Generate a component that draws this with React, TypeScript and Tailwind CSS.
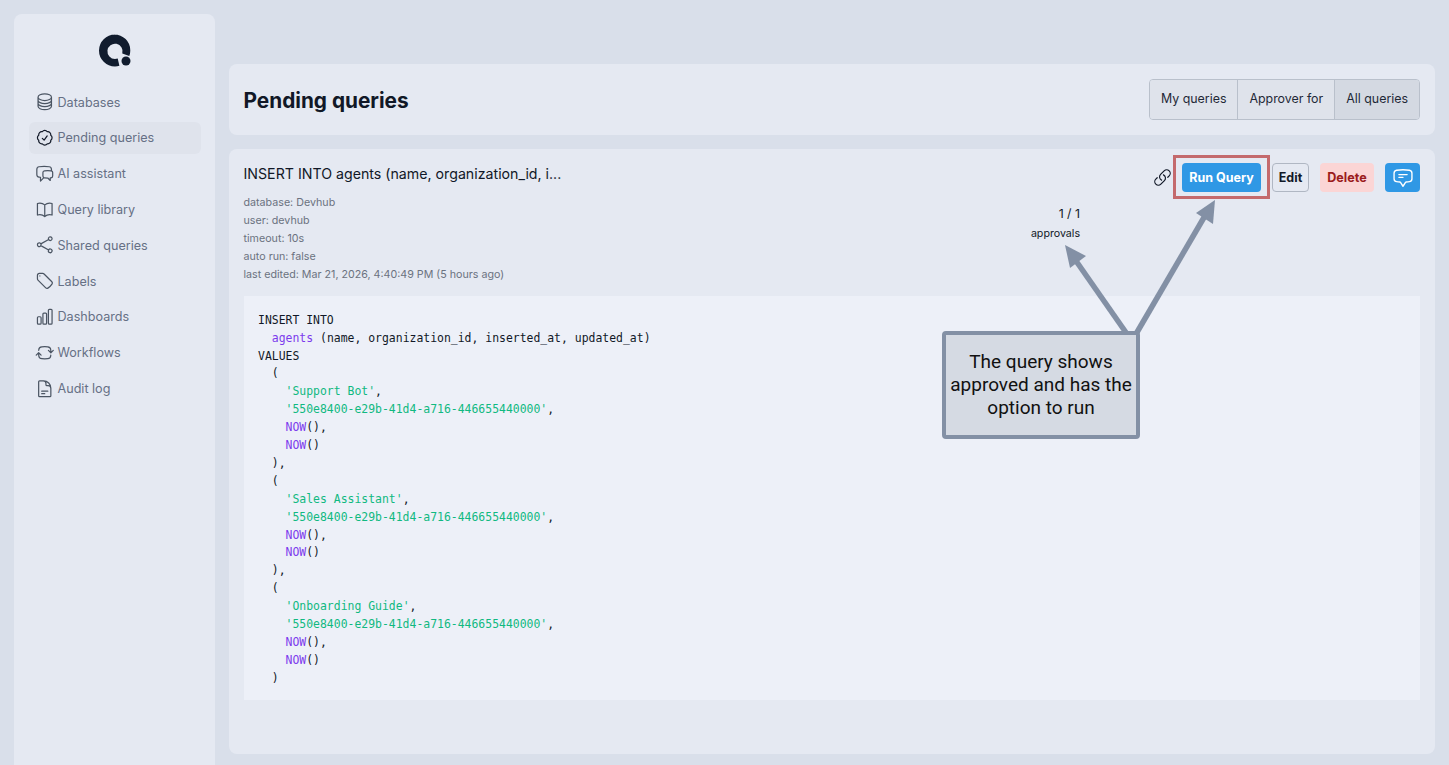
import type { ReactNode } from 'react';
import {
  HiOutlineCircleStack,
  HiOutlineCheckBadge,
  HiOutlineChatBubbleLeftRight,
  HiOutlineBookOpen,
  HiOutlineShare,
  HiOutlineTag,
  HiOutlineChartBar,
  HiOutlineArrowPathRoundedSquare,
  HiOutlineDocumentText,
  HiOutlineLink,
  HiOutlineChatBubbleBottomCenterText,
} from 'react-icons/hi2';

const navItems = [
  { label: 'Databases', icon: HiOutlineCircleStack },
  { label: 'Pending queries', icon: HiOutlineCheckBadge, active: true },
  { label: 'AI assistant', icon: HiOutlineChatBubbleLeftRight },
  { label: 'Query library', icon: HiOutlineBookOpen },
  { label: 'Shared queries', icon: HiOutlineShare },
  { label: 'Labels', icon: HiOutlineTag },
  { label: 'Dashboards', icon: HiOutlineChartBar },
  { label: 'Workflows', icon: HiOutlineArrowPathRoundedSquare },
  { label: 'Audit log', icon: HiOutlineDocumentText },
];

const Fn = ({ children }: { children: ReactNode }) => <span className="text-[#7c3aed]">{children}</span>;
const Str = ({ children }: { children: ReactNode }) => <span className="text-[#10b981]">{children}</span>;

function Row({ name, uuid = '550e8400-e29b-41d4-a716-446655440000', last }: { name: string; uuid?: string; last?: boolean }) {
  return (
    <>
      <div>{'  ('}</div>
      <div>{'    '}<Str>'{name}'</Str>,</div>
      <div>{'    '}<Str>'{uuid}'</Str>,</div>
      <div>{'    '}<Fn>NOW</Fn>(),</div>
      <div>{'    '}<Fn>NOW</Fn>()</div>
      <div>{last ? '  )' : '  ),'}</div>
    </>
  );
}

export default function App() {
  return (
    <div className="relative flex h-screen overflow-hidden bg-[#d9dfea] font-['Inter',sans-serif] text-[#111827]">
      {/* Sidebar */}
      <aside className="ml-[14px] mt-[14px] w-[201px] shrink-0 rounded-t-lg bg-[#e5e9f2] pl-[15px] pr-[14px]">
        <div className="flex justify-center pt-[19px] pb-[17px]">
          <svg className="ml-[1px]" width="36" height="36" viewBox="0 0 36 36">
            <path d="M17 1.5a16 16 0 1 0 0 32c1.6 0 3-.2 4.4-.7l-1.7-7.4c-.9.3-1.8.5-2.7.5a7.6 7.6 0 1 1 7.3-5.4l7 2.6c.6-1.8 1-3.7 1-5.7a16 16 0 0 0-16-16Z" fill="#111c2e" />
            <circle cx="28" cy="28" r="4.5" fill="#111c2e" />
          </svg>
        </div>
        <nav className="flex flex-col gap-[3.8px]">
          {navItems.map(({ label, icon: Icon, active }) => (
            <div
              key={label}
              className={`flex h-[32px] items-center gap-[3px] rounded-md pl-[6px] text-[12.6px] text-[#667085] ${active ? 'bg-[#dfe3ec]' : ''}`}
            >
              <Icon className={`h-[19.5px] w-[19.5px] shrink-0 ${active ? 'text-[#111827]' : 'text-[#4b5563]'}`} />
              <span className="pt-[2px]">{label}</span>
            </div>
          ))}
        </nav>
      </aside>

      {/* Main */}
      <main className="ml-[14px] flex w-[1206px] flex-col gap-[14px] pt-[64px] pb-[11px]">
        <div className="flex h-[71px] items-center justify-between rounded-lg bg-[#e5e9f2] pl-[14.5px] pr-[15px]">
          <h1 className="pt-[3px] text-[20.8px] font-bold">Pending queries</h1>
          <div className="flex h-[41px] overflow-hidden rounded border border-[#b9c0cb] text-[12.4px] text-[#1f2937]">
            <div className="flex items-center bg-[#dfe3eb] px-[11px]">My queries</div>
            <div className="flex items-center border-l border-[#b9c0cb] bg-[#dfe3eb] px-[11px]">Approver for</div>
            <div className="flex items-center border-l border-[#b9c0cb] bg-[#d4d9e2] px-[11px]">All queries</div>
          </div>
        </div>

        <div className="flex-1 rounded-lg bg-[#e5e9f2] px-[15px] pt-[14px]">
          <div className="flex h-[133px] justify-between">
            <div className="-ml-[0.5px]">
              <div className="pt-[1px] text-[14.2px] leading-[20px]">INSERT INTO agents (name, organization_id, i...</div>
              <div className="mt-[10px] text-[10.7px] leading-[18px] text-[#6b7280]">
                <div>database: Devhub</div>
                <div>user: devhub</div>
                <div>timeout: 10s</div>
                <div>auto run: false</div>
                <div>last edited: Mar 21, 2026, 4:40:49 PM (5 hours ago)</div>
              </div>
            </div>
            <div className="flex flex-col items-end">
              <div className="flex h-[29px] items-center">
                <HiOutlineLink className="mr-[10px] h-[19px] w-[19px] text-[#111827]" />
                <button className="h-[29px] w-[79px] rounded bg-[#2f98e5] pt-[1px] text-[12.5px] font-bold text-white">Run Query</button>
                <button className="ml-[11px] h-[29px] w-[37px] rounded border border-[#b0b7c3] pt-[1px] text-[12.5px] font-bold">Edit</button>
                <button className="ml-[11px] h-[29px] w-[54px] rounded bg-[#fbd5d5] pt-[1px] text-[12.6px] font-bold text-[#9b1c1c]">Delete</button>
                <button className="ml-[11px] flex h-[29px] w-[35px] items-center justify-center rounded bg-[#2f98e5]">
                  <HiOutlineChatBubbleBottomCenterText className="h-[22px] w-[22px] text-white" />
                </button>
              </div>
              <div className="mr-[340px] mt-[13px] flex flex-col items-end">
                <div className="text-[12.3px] leading-[18px]">1 / 1</div>
                <div className="mt-[4px] text-[10.65px] leading-[14px]">approvals</div>
              </div>
            </div>
          </div>

          <pre className="h-[404px] bg-[#edf0f8] px-[14px] pt-[15.7px] font-['DejaVu_Sans_Mono',monospace] text-[11.45px] leading-[17.9px] text-[#111827]">
            <div>INSERT INTO</div>
            <div>{'  '}<Fn>agents</Fn> (name, organization_id, inserted_at, updated_at)</div>
            <div>VALUES</div>
            <Row name="Support Bot" />
            <Row name="Sales Assistant" />
            <Row name="Onboarding Guide" last />
          </pre>
        </div>
      </main>

      {/* Annotation overlay */}
      <div className="absolute left-[1173px] top-[155px] h-[44px] w-[97px] border-[3px] border-[#c46a6d]" />
      <svg className="absolute left-0 top-0 pointer-events-none" width="1449" height="765">
        <g stroke="#8390a5" strokeWidth="5.5" fill="none">
          <line x1="1127" y1="334" x2="1074" y2="258" />
          <line x1="1136" y1="334" x2="1206" y2="214" />
        </g>
        <polygon points="1065,245 1086,256 1070,268" fill="#8390a5" />
        <polygon points="1215,200 1213,224 1196,213" fill="#8390a5" />
      </svg>
      <div className="absolute left-[942px] top-[331px] flex h-[108px] w-[198px] items-center justify-center rounded border-4 border-[#8390a5] bg-[#d5dae3] pb-[2px] text-center font-['Roboto',sans-serif] text-[19px] leading-[23px] text-[#111]">
        <span>The query shows<br />approved and has the<br />option to run</span>
      </div>
    </div>
  );
}
